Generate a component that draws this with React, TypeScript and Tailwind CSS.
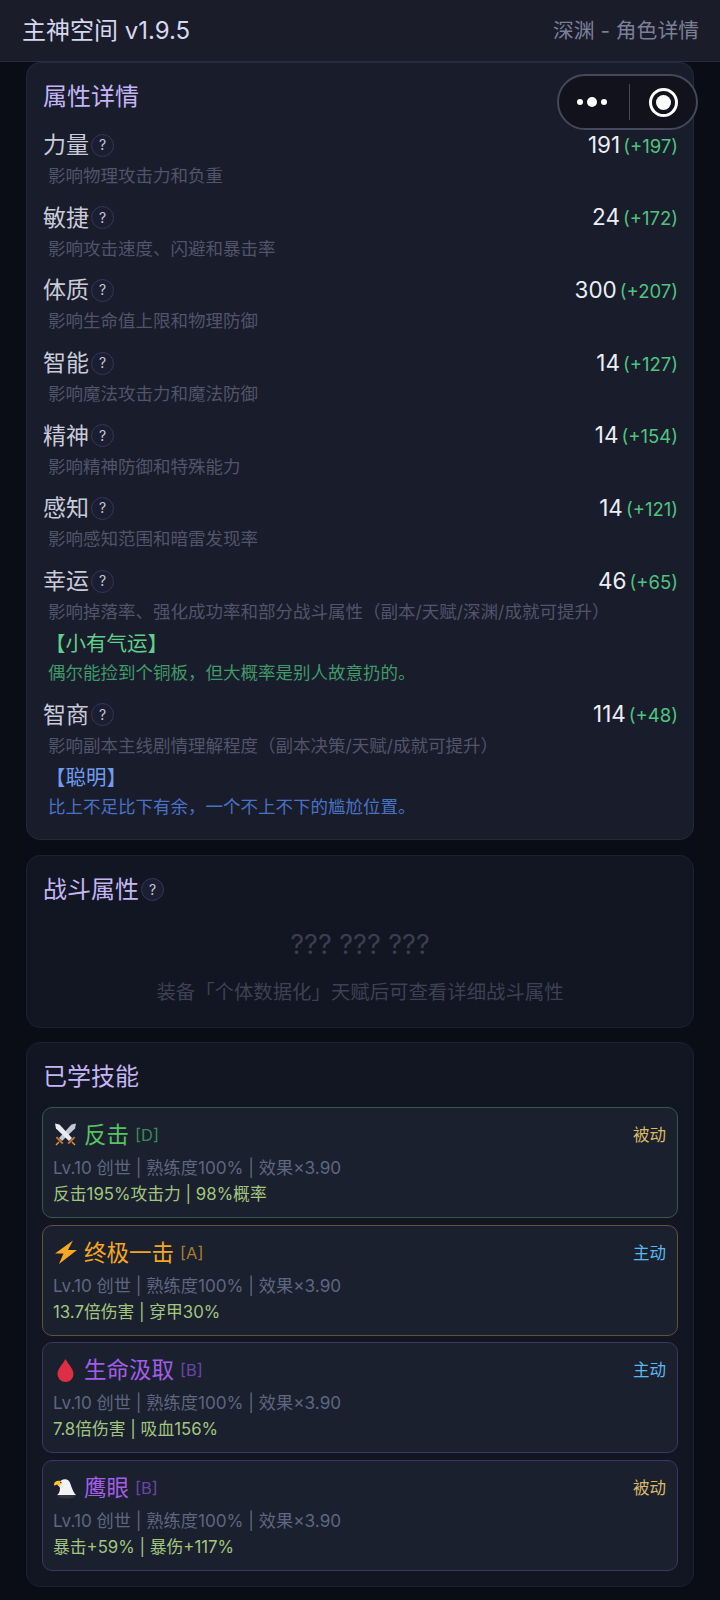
import React from 'react';

const fontStack = 'font-["Inter","Noto_Sans_CJK_SC",sans-serif]';

interface Attr {
  name: string;
  value: number;
  bonus: number;
  desc: string;
  tier?: { title: string; text: string; titleClass: string; textClass: string };
}

const attrs: Attr[] = [
  { name: '力量', value: 191, bonus: 197, desc: '影响物理攻击力和负重' },
  { name: '敏捷', value: 24, bonus: 172, desc: '影响攻击速度、闪避和暴击率' },
  { name: '体质', value: 300, bonus: 207, desc: '影响生命值上限和物理防御' },
  { name: '智能', value: 14, bonus: 127, desc: '影响魔法攻击力和魔法防御' },
  { name: '精神', value: 14, bonus: 154, desc: '影响精神防御和特殊能力' },
  { name: '感知', value: 14, bonus: 121, desc: '影响感知范围和暗雷发现率' },
  {
    name: '幸运',
    value: 46,
    bonus: 65,
    desc: '影响掉落率、强化成功率和部分战斗属性（副本/天赋/深渊/成就可提升）',
    tier: {
      title: '【小有气运】',
      text: '偶尔能捡到个铜板，但大概率是别人故意扔的。',
      titleClass: 'text-[#5fd08a]',
      textClass: 'text-[#3f9a68]',
    },
  },
  {
    name: '智商',
    value: 114,
    bonus: 48,
    desc: '影响副本主线剧情理解程度（副本决策/天赋/成就可提升）',
    tier: {
      title: '【聪明】',
      text: '比上不足比下有余，一个不上不下的尴尬位置。',
      titleClass: 'text-[#6f9cf0]',
      textClass: 'text-[#4a72c4]',
    },
  },
];

const SwordsIcon = () => (
  <svg width="25" height="25" viewBox="0 0 25 25" className="shrink-0">
    <path d="M23 1.500l-1 5L9 19l-3-3L18.500 2.500z" fill="#c3c8d2" />
    <path d="M2 1.500l1 5L16 19l3-3L6.500 2.500z" fill="#e8ebf0" />
    <path d="M4 14.500l6.500 6.500-1.300 1.200-6.500-6.500z" fill="#c9782c" />
    <path d="M21 14.500L14.500 21l1.300 1.200 6.500-6.500z" fill="#c9782c" />
    <path d="M5.500 19.500l-3 3 1 1 3-3z" fill="#e59a3a" />
    <path d="M19.500 19.500l3 3-1 1-3-3z" fill="#e59a3a" />
  </svg>
);

const BoltIcon = () => (
  <svg width="25" height="25" viewBox="0 0 25 25" className="shrink-0">
    <path d="M20 0.500L2 13.500h8.500L6 24l18-14h-9z" fill="#f9a825" />
  </svg>
);

const DropIcon = () => (
  <svg width="25" height="25" viewBox="0 0 25 25" className="shrink-0">
    <path d="M12.500 1C10 6 4.500 10.500 4.500 16a8 8 0 0016 0C20.500 10.500 15 6 12.500 1z" fill="#dd2e44" />
  </svg>
);

const EagleIcon = () => (
  <svg width="25" height="25" viewBox="0 0 25 25" className="shrink-0">
    <path d="M4 20c2-1 3-4 3-7L6 11H4.500L8 5.500c3-2 6-1.500 8 .5 2.500 4 3 10 7 14z" fill="#f2f3f5" />
    <path d="M4 20h19l-2 2.500c-5 1.200-11 1.200-15 0z" fill="#35343a" />
    <path d="M1 9.500c0-2.500 3-4.200 6.200-3.700L9 8l-3 3.500L4.700 9.800c-1.500 0-2.700.6-3.200 1z" fill="#f7c52d" />
    <circle cx="7.800" cy="7.500" r="0.700" fill="#222" />
  </svg>
);

const skills = [
  {
    icon: <SwordsIcon />,
    name: '反击',
    grade: 'D',
    mode: '被动',
    effect: '反击195%攻击力 | 98%概率',
    border: 'border-[#36584a]',
    nameClass: 'text-[#58c263]',
    gradeClass: 'text-[#3c8a58]',
    modeClass: 'text-[#d9b866]',
  },
  {
    icon: <BoltIcon />,
    name: '终极一击',
    grade: 'A',
    mode: '主动',
    effect: '13.7倍伤害 | 穿甲30%',
    border: 'border-[#62523a]',
    nameClass: 'text-[#f5a623]',
    gradeClass: 'text-[#a67c30]',
    modeClass: 'text-[#5cb8ec]',
  },
  {
    icon: <DropIcon />,
    name: '生命汲取',
    grade: 'B',
    mode: '主动',
    effect: '7.8倍伤害 | 吸血156%',
    border: 'border-[#3d3664]',
    nameClass: 'text-[#a45de8]',
    gradeClass: 'text-[#6a45a8]',
    modeClass: 'text-[#5cb8ec]',
  },
  {
    icon: <EagleIcon />,
    name: '鹰眼',
    grade: 'B',
    mode: '被动',
    effect: '暴击+59% | 暴伤+117%',
    border: 'border-[#3d3664]',
    nameClass: 'text-[#a45de8]',
    gradeClass: 'text-[#6a45a8]',
    modeClass: 'text-[#d9b866]',
  },
];

const HelpBadge = () => (
  <span className="ml-[2px] flex h-[23px] w-[23px] items-center justify-center rounded-full border border-[#33385a] bg-[#1b1e30] text-[14px] leading-none text-[#c5c8d8]">
    ?
  </span>
);

const AttrRow = ({ attr }: { attr: Attr }) => (
  <div>
    <div className="flex h-8 items-center justify-between">
      <div className="flex items-center">
        <span className="text-[23px] leading-8 text-[#c9cbd9]">{attr.name}</span>
        <HelpBadge />
      </div>
      <div className="flex items-baseline">
        <span className="text-[22.500px] leading-8 text-[#eceef5]">{attr.value}</span>
        <span className="ml-[3px] text-[18.500px] leading-8 text-[#4fc47f]">(+{attr.bonus})</span>
      </div>
    </div>
    <div className="ml-[5px] mt-[3px] text-[17.500px] leading-6 text-[#51546a]">{attr.desc}</div>
    {attr.tier && (
      <div className="ml-[5px]">
        <div className={`-ml-[3px] mt-[6px] text-[20.500px] leading-[28px] ${attr.tier.titleClass}`}>{attr.tier.title}</div>
        <div className={`mt-[3px] text-[17.500px] leading-6 ${attr.tier.textClass}`}>{attr.tier.text}</div>
      </div>
    )}
  </div>
);

const SkillCard = ({ skill }: { skill: (typeof skills)[number] }) => (
  <div className={`h-[111px] rounded-[10px] border bg-[#1a202e] pl-[10px] pr-[11px] pt-[11px] ${skill.border}`}>
    <div className="flex h-8 items-center justify-between">
      <div className="flex items-center">
        <span className="w-[31px]">{skill.icon}</span>
        <span className={`text-[22.500px] leading-8 ${skill.nameClass}`}>{skill.name}</span>
        <span className={`ml-[6px] text-[16.500px] leading-8 ${skill.gradeClass}`}>[{skill.grade}]</span>
      </div>
      <span className={`text-[16.500px] leading-8 ${skill.modeClass}`}>{skill.mode}</span>
    </div>
    <div className="mt-[3px] text-[17.200px] leading-[27px] text-[#5f6680]">Lv.10 创世 | 熟练度100% | 效果×3.90</div>
    <div className="text-[16.800px] leading-[27px] text-[#a3c67e]">{skill.effect}</div>
  </div>
);

export default function App() {
  return (
    <div className={`relative h-[1600px] w-[720px] overflow-hidden bg-[#0b0d16] ${fontStack}`}>
      <header className="flex h-[62px] items-center justify-between border-b border-[#2a2d40] bg-[#1a1c2a] pl-[22px] pr-[21px]">
        <span className="text-2xl text-[#d5d8ee]">主神空间 v1.9.5</span>
        <span className="text-[20.800px] text-[#7c7f98]">深渊 - 角色详情</span>
      </header>

      <div className="px-[26px]">
        <section className="rounded-[14px] border border-[#24283b] bg-[#191c2b] pb-5 pl-4 pr-[15px] pt-[18px]">
          <h2 className="text-2xl leading-8 text-[#c4b5f5]">属性详情</h2>
          <div className="mt-4 flex flex-col gap-[13.700px]">
            {attrs.map((attr) => (
              <AttrRow key={attr.name} attr={attr} />
            ))}
          </div>
        </section>

        <section className="mt-[15px] h-[173px] rounded-[14px] border border-[#1c2031] bg-[#121522] px-4 pt-[18px]">
          <h2 className="flex items-center text-2xl leading-8 text-[#c4b5f5]">
            战斗属性
            <HelpBadge />
          </h2>
          <div className="mt-[21px] text-center text-[27px] leading-9 text-[#3b3e50]">??? ??? ???</div>
          <div className="mt-[13px] text-center text-[19.400px] leading-8 text-[#3e4153]">
            装备「个体数据化」天赋后可查看详细战斗属性
          </div>
        </section>

        <section className="mt-[14px] h-[545px] rounded-[14px] border border-[#1c2031] bg-[#121522] px-[15px] pt-[18px]">
          <h2 className="ml-[1px] text-2xl leading-8 text-[#c4b5f5]">已学技能</h2>
          <div className="mt-[14px] flex flex-col gap-[6.700px]">
            {skills.map((skill) => (
              <SkillCard key={skill.name} skill={skill} />
            ))}
          </div>
        </section>
      </div>

      <div className="absolute left-[557px] top-[74px] flex h-14 w-[141px] items-center rounded-full border-2 border-[#45475a] bg-[#11121c]">
        <div className="flex w-[70px] items-center justify-center gap-1 pr-1">
          <span className="h-[6px] w-[6px] rounded-full bg-white" />
          <span className="h-[10px] w-[10px] rounded-full bg-white" />
          <span className="h-[6px] w-[6px] rounded-full bg-white" />
        </div>
        <span className="h-9 w-px bg-[#45475a]" />
        <div className="flex flex-1 items-center justify-center">
          <span className="flex h-[29px] w-[29px] items-center justify-center rounded-full border-[3px] border-white">
            <span className="h-[15px] w-[15px] rounded-full bg-white" />
          </span>
        </div>
      </div>
    </div>
  );
}
